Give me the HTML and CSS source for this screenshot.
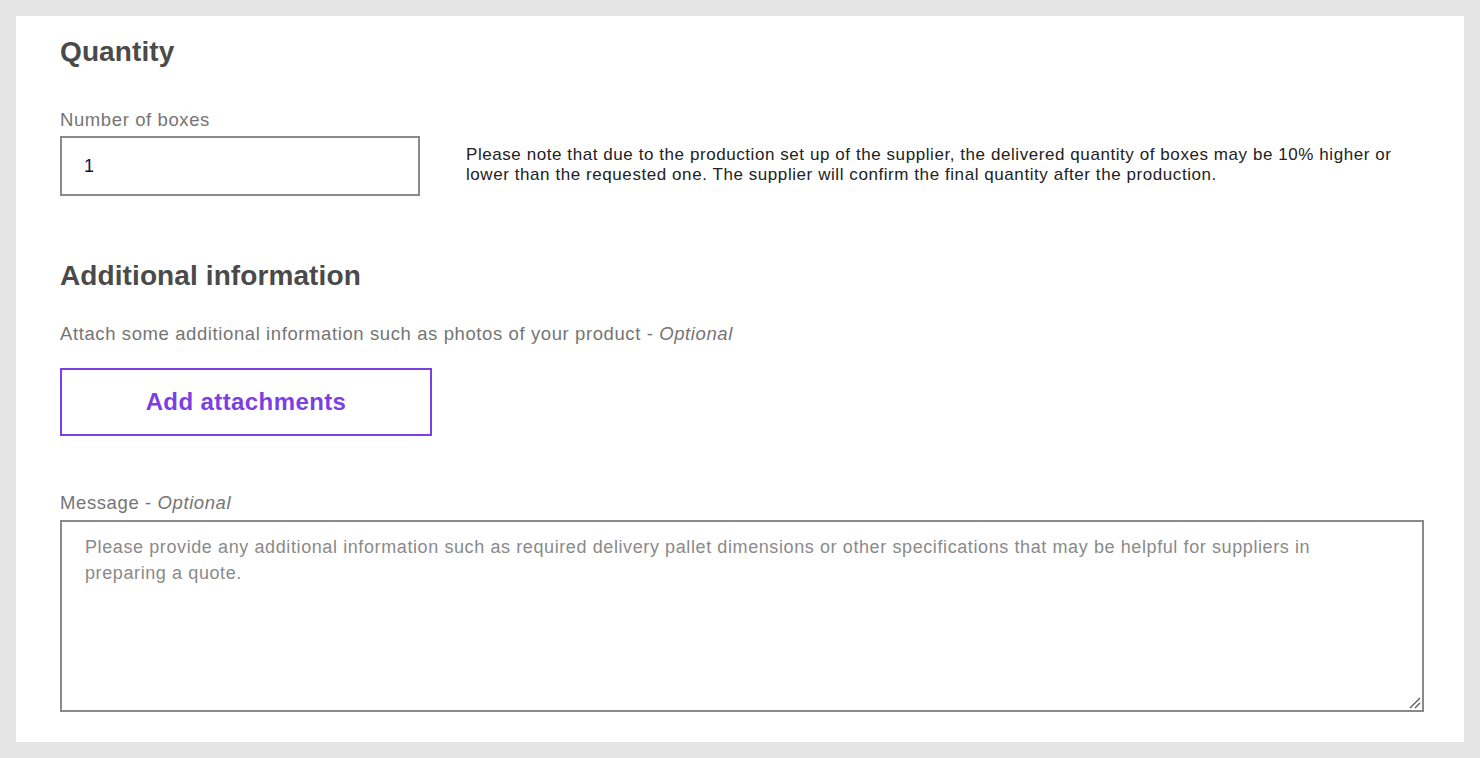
FILE: index.html
```html
<!DOCTYPE html>
<html>
<head>
<meta charset="utf-8">
<link rel="stylesheet" href="styles.css">
</head>
<body>
<div class="panel">
  <h2 class="heading">Quantity</h2>
  <div class="label">Number of boxes</div>
  <div class="qty-row">
    <div class="input">1</div>
    <p class="note">Please note that due to the production set up of the supplier, the delivered quantity of boxes may be 10% higher or lower than the requested one. The supplier will confirm the final quantity after the production.</p>
  </div>
  <h2 class="heading heading-2">Additional information</h2>
  <div class="label attach-label">Attach some additional information such as photos of your product - <em>Optional</em></div>
  <div class="btn">Add attachments</div>
  <div class="label msg-label">Message - <em>Optional</em></div>
  <div class="textarea">
    <div class="placeholder">Please provide any additional information such as required delivery pallet dimensions or other specifications that may be helpful for suppliers in preparing a quote.</div>
    <svg class="grip" width="14" height="14" viewBox="0 0 14 14"><path d="M13 3 L3 13 M13 8 L8 13" stroke="#555" stroke-width="1.2" fill="none"/></svg>
  </div>
</div>
</body>
</html>
```
FILE: styles.css
```css
html, body { margin: 0; padding: 0; }
body {
  background: #e5e5e5;
  font-family: "Liberation Sans", Arial, Helvetica, sans-serif;
  width: 1480px;
  height: 758px;
  overflow: hidden;
}
.panel {
  background: #fff;
  margin: 16px;
  height: 726px;
  box-sizing: border-box;
  padding: 19px 40px 0 44px;
}
.heading {
  margin: 0;
  font-size: 28px;
  font-weight: bold;
  color: #4a4a4a;
  line-height: 34px;
  letter-spacing: 0.1px;
}
.label {
  font-size: 18.5px;
  letter-spacing: 0.6px;
  color: #757575;
  line-height: 22px;
}
.label em { font-style: italic; }
.heading + .label { margin-top: 40px; }
.qty-row {
  display: flex;
  align-items: center;
  margin-top: 5px;
}
.input {
  width: 360px;
  height: 60px;
  box-sizing: border-box;
  border: 2px solid #8a8a8a;
  padding-left: 22px;
  display: flex;
  align-items: center;
  font-size: 18px;
  color: #101050;
}
.note {
  margin: 0 0 2px 46px;
  font-size: 17px;
  letter-spacing: 0.57px;
  line-height: 20px;
  color: #222;
  width: 940px;
}
.heading-2 { margin-top: 63px; }
.attach-label { margin-top: 30px !important; }
.btn {
  margin-top: 23px;
  width: 372px;
  height: 68px;
  box-sizing: border-box;
  border: 2px solid #7b3fe4;
  color: #7b3fe4;
  font-size: 24px;
  font-weight: bold;
  letter-spacing: 0.4px;
  display: flex;
  align-items: center;
  justify-content: center;
}
.msg-label { margin-top: 56px; }
.textarea {
  position: relative;
  margin-top: 6px;
  width: 1364px;
  height: 192px;
  box-sizing: border-box;
  border: 2px solid #8a8a8a;
  padding: 12px 23px;
}
.placeholder {
  font-size: 18px;
  letter-spacing: 0.6px;
  line-height: 26px;
  color: #8a8a8a;
  width: 1260px;
}
.grip {
  position: absolute;
  right: 1px;
  bottom: 1px;
}
```
